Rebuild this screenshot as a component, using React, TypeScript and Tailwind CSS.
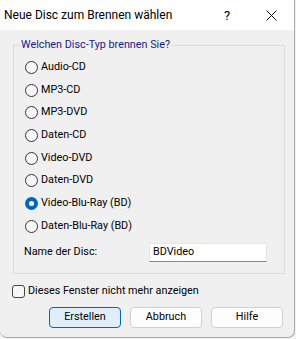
import React from "react";

const items = [
  "Audio-CD",
  "MP3-CD",
  "MP3-DVD",
  "Daten-CD",
  "Video-DVD",
  "Daten-DVD",
  "Video-Blu-Ray (BD)",
  "Daten-Blu-Ray (BD)",
];

function Radio({ checked }: { checked: boolean }) {
  return checked ? (
    <span className="w-[13px] h-[13px] rounded-full bg-[#0067c0] flex items-center justify-center shrink-0">
      <span className="w-[5px] h-[5px] rounded-full bg-white" />
    </span>
  ) : (
    <span className="w-[13px] h-[13px] rounded-full border border-[#333333] bg-[#f7f7f7] shrink-0" />
  );
}

export default function App() {
  return (
    <div
      className="w-[296px] h-[339px] bg-[#f3f3f3] text-[10.8px] text-black"
      style={{ fontFamily: 'Roboto, "Segoe UI", sans-serif' }}
    >
      <div className="w-[295px] h-[338px] bg-[#f0f0f0] border-r border-b border-[#a8a8a8] rounded-b-[7px] overflow-hidden flex flex-col">
        {/* title bar */}
        <div className="h-[30px] bg-white flex items-center pl-[4px] shrink-0">
          <span className="leading-none text-[12px] w-[220px]">Neue Disc zum Brennen wählen</span>
          <span className="text-[13px] leading-none">?</span>
          <svg width="11" height="11" viewBox="0 0 11 11" className="ml-[36px]">
            <path d="M0.5 0.5 L10.5 10.5 M10.5 0.5 L0.5 10.5" stroke="#111" strokeWidth="1" />
          </svg>
        </div>

        {/* group box */}
        <div className="relative mt-[15px] ml-[13px] w-[272px] border border-[#dcdcdc] pt-[10px] pb-[11px]">
          <span className="absolute -top-[9px] left-[6px] px-[1px] bg-[#f0f0f0] text-[#16208a] leading-[16px]">
            Welchen Disc-Typ brennen Sie?
          </span>
          <div className="flex flex-col pl-[11px]">
            {items.map((t, i) => (
              <div key={t} className="h-[22.7px] flex items-center gap-[3px]">
                <Radio checked={i === 6} />
                <span className="leading-none">{t}</span>
              </div>
            ))}
          </div>
          <div className="mt-[5px] h-[19px] flex items-center pl-[10px]">
            <span className="leading-none">Name der Disc:</span>
            <div className="ml-auto mr-[17px] w-[118px] h-[19px] bg-white border border-[#e5e5e5] border-b-[#8a8a8a] flex items-center pl-[3px]">
              <span className="leading-none">BDVideo</span>
            </div>
          </div>
        </div>

        {/* checkbox */}
        <div className="mt-[11px] ml-[12px] flex items-center gap-[3px] h-[13px]">
          <span className="w-[13px] h-[13px] rounded-[3px] border border-[#444] bg-[#f7f7f7] shrink-0" />
          <span className="leading-none">Dieses Fenster nicht mehr anzeigen</span>
        </div>

        {/* buttons */}
        <div className="mt-[9px] ml-[49px] flex gap-[9px]">
          <div className="w-[72px] h-[21px] rounded-[4px] border border-[#0067c0] bg-[#e0eef9] flex items-center justify-center">
            <span className="leading-none">Erstellen</span>
          </div>
          <div className="w-[72px] h-[21px] rounded-[4px] border border-[#d0d0d0] bg-[#fdfdfd] flex items-center justify-center">
            <span className="leading-none">Abbruch</span>
          </div>
          <div className="w-[72px] h-[21px] rounded-[4px] border border-[#d0d0d0] bg-[#fdfdfd] flex items-center justify-center">
            <span className="leading-none">Hilfe</span>
          </div>
        </div>
      </div>
    </div>
  );
}
